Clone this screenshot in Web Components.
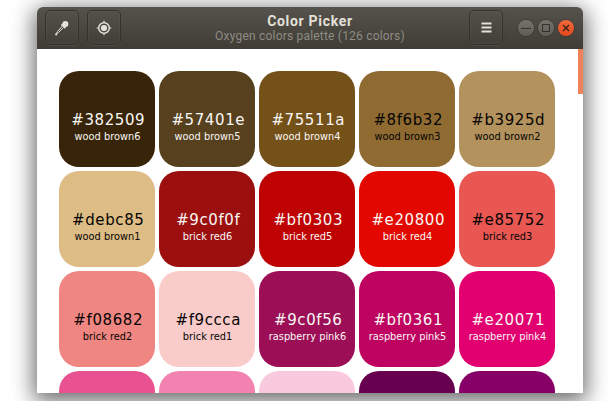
<!DOCTYPE html>
<html><head><meta charset="utf-8"><style>
html,body{margin:0;background:#fff;height:401px;overflow:hidden}
body{padding:7px 25px 0 37px;box-sizing:border-box;font-family:"DejaVu Sans",sans-serif}
</style></head><body>
<picker-window title-text="Color Picker" subtitle="Oxygen colors palette (126 colors)">
<color-card hex="#382509" name="wood brown6" light></color-card>
<color-card hex="#57401e" name="wood brown5" light></color-card>
<color-card hex="#75511a" name="wood brown4" light></color-card>
<color-card hex="#8f6b32" name="wood brown3"></color-card>
<color-card hex="#b3925d" name="wood brown2"></color-card>
<color-card hex="#debc85" name="wood brown1"></color-card>
<color-card hex="#9c0f0f" name="brick red6" light></color-card>
<color-card hex="#bf0303" name="brick red5" light></color-card>
<color-card hex="#e20800" name="brick red4" light></color-card>
<color-card hex="#e85752" name="brick red3"></color-card>
<color-card hex="#f08682" name="brick red2"></color-card>
<color-card hex="#f9ccca" name="brick red1"></color-card>
<color-card hex="#9c0f56" name="raspberry pink6" light></color-card>
<color-card hex="#bf0361" name="raspberry pink5" light></color-card>
<color-card hex="#e20071" name="raspberry pink4" light></color-card>
<color-card swatch="#e85290"></color-card>
<color-card swatch="#f282b0"></color-card>
<color-card swatch="#f9cade"></color-card>
<color-card swatch="#66004f"></color-card>
<color-card swatch="#860067"></color-card>
</picker-window>
<script>
class ColorCard extends HTMLElement{
 connectedCallback(){
  const s=this.attachShadow({mode:'open'});
  const hex=this.getAttribute('hex'),name=this.getAttribute('name'),sw=this.getAttribute('swatch');
  const fg=this.hasAttribute('light')?'#f8f7f4':'#050403';
  s.innerHTML=`<style>
  :host{display:flex;flex-direction:column;align-items:center;width:96px;height:96px;box-sizing:border-box;padding-top:39px;border-radius:20px;background:${hex||sw};color:${fg};text-align:center;white-space:nowrap}
  .h{font-size:15px;letter-spacing:.6px;line-height:20px;padding-left:2.5px}
  .n{font-size:9.8px;line-height:14px;margin-top:0;padding-left:1px}
  </style>${hex?`<div class="h">${hex}</div><div class="n">${name}</div>`:''}`;
 }
}
customElements.define('color-card',ColorCard);
class HeaderButton extends HTMLElement{
 connectedCallback(){
  const s=this.attachShadow({mode:'open'});
  s.innerHTML=`<style>
  :host{display:flex;align-items:center;justify-content:center;width:34px;height:35px;box-sizing:border-box;border:1px solid #34322c;border-radius:5px;box-shadow:inset 0 0 0 1px rgba(255,255,255,.035),0 1px 0 rgba(255,255,255,.07)}
  </style><slot></slot>`;
 }
}
customElements.define('header-button',HeaderButton);
class WindowControl extends HTMLElement{
 connectedCallback(){
  const s=this.attachShadow({mode:'open'});
  const close=this.hasAttribute('close');
  s.innerHTML=`<style>
  :host{display:flex;align-items:center;justify-content:center;width:16px;height:16px;border-radius:50%;background:${close?'linear-gradient(#f0693c,#e4491c)':'linear-gradient(#75736c,#5f5d56)'};box-shadow:0 0 0 1px rgba(40,38,32,.35)}
  </style><slot></slot>`;
 }
}
customElements.define('window-control',WindowControl);
class PickerWindow extends HTMLElement{
 connectedCallback(){
  const s=this.attachShadow({mode:'open'});
  s.innerHTML=`<style>
  :host{display:block;position:relative;width:546px;height:386px;border-radius:6px 6px 0 0;background:#fff;box-shadow:0 5px 22px 3px rgba(0,0,0,.6);overflow:hidden}
  header{display:grid;grid-template-columns:1fr auto 1fr;align-items:center;height:42px;box-sizing:border-box;padding:3px 8px 4px;background:linear-gradient(#56534c,#3e3c35)}
  .l,.r{display:flex;align-items:center}
  .l{gap:8px}
  .r{justify-content:flex-end}
  .sep{width:1px;height:28px;background:#4a4841;margin:0 7px 0 7px}
  .ctl{display:flex;gap:4px;margin-right:1px}
  .c{text-align:center;font-family:Roboto,sans-serif;white-space:nowrap;margin-top:1px}
  .t{font-size:14px;line-height:16px;font-weight:700;letter-spacing:.7px;color:#e4e0d8}
  .st{font-size:12px;line-height:15px;letter-spacing:.2px;color:#8f8c84}
  main{display:grid;grid-template-columns:repeat(5,96px);gap:4px;padding:22px 0 0 22px}
  .bar{position:absolute;right:0;top:42px;width:5px;height:45px;background:#f08259}
  svg{display:block}
  </style>
  <header>
   <div class="l">
    <header-button><svg width="16" height="16" viewBox="0 0 16 16"><circle cx="11.4" cy="4" r="3" fill="#e4e1da"/><path d="M7.6 4.2 11.4 8" stroke="#e4e1da" stroke-width="2"/><path d="M8.2 6.2 3.4 11.6 2.4 13.6M9.4 7.6 4.4 12.6 2.4 13.6" fill="none" stroke="#e4e1da" stroke-width="1"/><circle cx="2.2" cy="14.4" r="1.1" fill="#e4e1da"/></svg></header-button>
    <header-button><svg width="16" height="16" viewBox="0 0 16 16"><circle cx="8" cy="8" r="5.3" fill="none" stroke="#e4e1da" stroke-width="1.5"/><circle cx="8" cy="8" r="3.1" fill="#e4e1da"/><path d="M8 .6v2M8 13.4v2M.6 8h2M13.4 8h2" stroke="#e4e1da" stroke-width="1"/></svg></header-button>
   </div>
   <div class="c"><div class="t">${this.getAttribute('title-text')}</div><div class="st">${this.getAttribute('subtitle')}</div></div>
   <div class="r">
    <header-button><svg width="11" height="11" viewBox="0 0 11 11"><path d="M.5 1.5h10M.5 5.5h10M.5 9.5h10" stroke="#e4e1da" stroke-width="2"/></svg></header-button>
    <div class="sep"></div>
    <div class="ctl">
     <window-control><svg width="10" height="10" viewBox="0 0 10 10"><path d="M0 5.5h10" stroke="#33312b" stroke-width="1"/></svg></window-control>
     <window-control><svg width="10" height="10" viewBox="0 0 10 10"><rect x="1.5" y="1.5" width="7" height="7" fill="none" stroke="#33312b"/></svg></window-control>
     <window-control close><svg width="8" height="8" viewBox="0 0 8 8"><path d="M1 1l6 6M7 1 1 7" stroke="#33211a" stroke-width="1.3"/></svg></window-control>
    </div>
   </div>
  </header>
  <main><slot></slot></main>
  <div class="bar"></div>`;
 }
}
customElements.define('picker-window',PickerWindow);
</script>
</body></html>
